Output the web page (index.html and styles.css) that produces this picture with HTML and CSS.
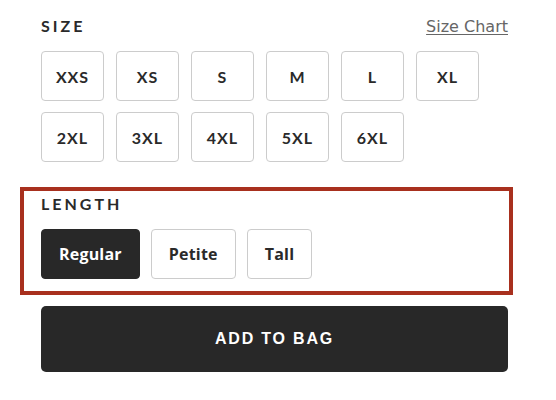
FILE: index.html
```html
<!DOCTYPE html>
<html lang="en">
<head>
<meta charset="utf-8">
<title>Product options</title>
<link rel="stylesheet" href="styles.css">
</head>
<body>
<div class="options">
  <section class="size">
    <div class="size-head">
      <span class="label">SIZE</span>
      <a class="chart-link" href="#">Size Chart</a>
    </div>
    <div class="size-grid">
      <button class="size-btn">XXS</button>
      <button class="size-btn">XS</button>
      <button class="size-btn">S</button>
      <button class="size-btn">M</button>
      <button class="size-btn">L</button>
      <button class="size-btn">XL</button>
      <button class="size-btn">2XL</button>
      <button class="size-btn">3XL</button>
      <button class="size-btn">4XL</button>
      <button class="size-btn">5XL</button>
      <button class="size-btn">6XL</button>
    </div>
  </section>
  <section class="length">
    <div class="label">LENGTH</div>
    <div class="length-row">
      <button class="length-btn is-selected">Regular</button>
      <button class="length-btn">Petite</button>
      <button class="length-btn">Tall</button>
    </div>
  </section>
  <button class="add-btn">ADD TO BAG</button>
</div>
</body>
</html>
```
FILE: styles.css
```css
html, body {
  margin: 0;
  padding: 0;
  background: #ffffff;
}
body {
  font-family: Lato, "Noto Sans", sans-serif;
  color: #2a2a2a;
}
.options {
  width: 467px;
  padding: 14px 0 0 41px;
}
.size-head {
  display: flex;
  justify-content: space-between;
  align-items: baseline;
  height: 24px;
}
.label {
  font-size: 16px;
  font-weight: 700;
  letter-spacing: 3px;
  line-height: 24px;
  color: #2a2a2a;
}
.chart-link {
  font-family: "DejaVu Sans", sans-serif;
  font-size: 16px;
  color: #666666;
  text-decoration: underline;
  text-underline-offset: 2px;
}
.size-grid {
  display: flex;
  flex-wrap: wrap;
  gap: 11px 12px;
  width: 450px;
  margin-top: 13px;
}
.size-btn, .length-btn {
  box-sizing: border-box;
  height: 50px;
  background: #ffffff;
  border: 1px solid #cccccc;
  border-radius: 4px;
  font-family: inherit;
  font-size: 16px;
  font-weight: 700;
  color: #2a2a2a;
  padding: 0;
  cursor: pointer;
}
.size-btn {
  width: 63px;
  letter-spacing: 1px;
}
.length {
  margin: 25px -5px 0 -21px;
  border: 4px solid #a8301e;
  padding: 1px 0 12px 17px;
}
.length-row {
  display: flex;
  gap: 11px;
  margin-top: 13px;
}
.length-btn {
  font-family: "Open Sans", sans-serif;
  letter-spacing: 0.2px;
  padding: 0 17px;
}
.length-btn.is-selected {
  background: #282828;
  border-color: #282828;
  color: #ffffff;
}
.add-btn {
  display: block;
  box-sizing: border-box;
  width: 467px;
  height: 66px;
  margin-top: 11px;
  background: #282828;
  border: 0;
  border-radius: 5px;
  color: #ffffff;
  font-family: "Liberation Sans", Arial, sans-serif;
  font-size: 16px;
  font-weight: 700;
  letter-spacing: 1.8px;
  cursor: pointer;
}
```
